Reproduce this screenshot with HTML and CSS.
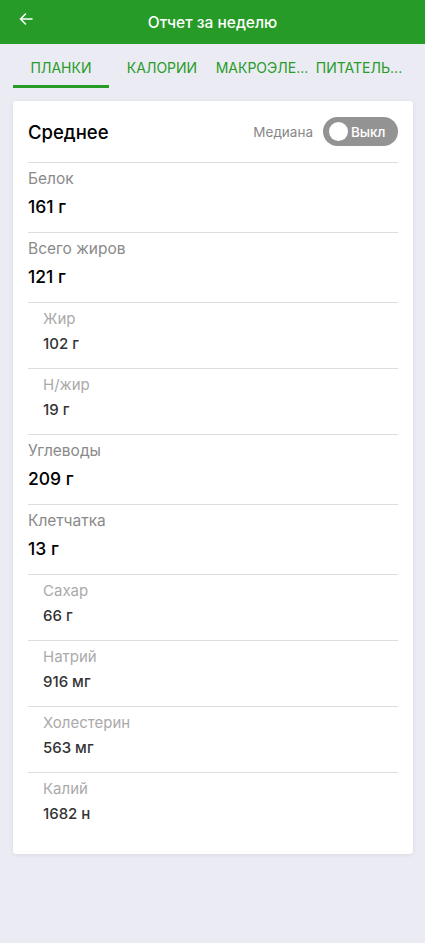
FILE: index.html
```html
<!DOCTYPE html>
<html lang="ru">
<head>
<meta charset="utf-8">
<link rel="stylesheet" href="styles.css">
</head>
<body>
<header class="topbar">
  <span class="back">
    <svg width="14" height="12" viewBox="0 0 14 12"><path d="M13 6H1.5M6.5 1L1.5 6l5 5" fill="none" stroke="#fff" stroke-width="1.6" stroke-linecap="round" stroke-linejoin="round"/></svg>
  </span>
  <h1 class="title">Отчет за неделю</h1>
</header>
<nav class="tabs">
  <div class="tab active">ПЛАНКИ</div>
  <div class="tab">КАЛОРИИ</div>
  <div class="tab">МАКРОЭЛЕ...</div>
  <div class="tab">ПИТАТЕЛЬ...</div>
</nav>
<main class="card">
  <div class="card-head">
    <div class="head-title">Среднее</div>
    <div class="median">
      <span class="median-label">Медиана</span>
      <span class="toggle"><span class="knob"></span><span class="toggle-text">Выкл</span></span>
    </div>
  </div>
  <div class="row main"><div class="label">Белок</div><div class="value">161 г</div></div>
  <div class="row main"><div class="label">Всего жиров</div><div class="value">121 г</div></div>
  <div class="row sub"><div class="label">Жир</div><div class="value">102 г</div></div>
  <div class="row sub"><div class="label">Н/жир</div><div class="value">19 г</div></div>
  <div class="row main"><div class="label">Углеводы</div><div class="value">209 г</div></div>
  <div class="row main"><div class="label">Клетчатка</div><div class="value">13 г</div></div>
  <div class="row sub"><div class="label">Сахар</div><div class="value">66 г</div></div>
  <div class="row sub"><div class="label">Натрий</div><div class="value">916 мг</div></div>
  <div class="row sub"><div class="label">Холестерин</div><div class="value">563 мг</div></div>
  <div class="row sub"><div class="label">Калий</div><div class="value">1682 н</div></div>
</main>
</body>
</html>
```
FILE: styles.css
```css
* { box-sizing: border-box; }
html, body { margin: 0; padding: 0; }
body {
  background: #ebebf3;
  font-family: Inter, Roboto, "Liberation Sans", sans-serif;
  min-height: 943px;
}
.topbar {
  height: 44px;
  background: #269b27;
  display: flex;
  align-items: center;
  justify-content: center;
  position: relative;
}
.back {
  position: absolute;
  left: 19px;
  top: 13px;
  display: flex;
}
.title {
  margin: 0;
  color: #fff;
  font-size: 15.5px;
  font-weight: 500;
}
.tabs {
  display: grid;
  grid-template-columns: 96px 106px 94px 100px;
  padding: 0 0 0 13px;
  height: 44px;
}
.tab {
  display: flex;
  align-items: center;
  justify-content: center;
  color: #269b27;
  font-size: 14px;
  white-space: nowrap;
  padding-top: 5px;
  border-bottom: 3px solid transparent;
}
.tab.active { border-bottom-color: #269b27; }
.card {
  margin: 13px 12px 0 13px;
  background: #fff;
  border-radius: 3px;
  box-shadow: 0 1px 4px rgba(0,0,0,0.08);
  padding: 0 15px 15px 15px;
}
.card-head {
  height: 62px;
  display: flex;
  align-items: center;
  justify-content: space-between;
  border-bottom: 1px solid #dedede;
}
.head-title {
  font-size: 18.5px;
  font-weight: 500;
  color: #000;
}
.median { display: flex; align-items: center; gap: 10px; }
.median-label { color: #888; font-size: 13.5px; }
.toggle {
  width: 75px;
  height: 29px;
  border-radius: 15px;
  background: #939393;
  display: flex;
  align-items: center;
  padding-left: 6px;
  gap: 3px;
}
.knob {
  width: 19px;
  height: 19px;
  border-radius: 50%;
  background: #fff;
}
.toggle-text {
  color: #fff;
  font-size: 13.5px;
  font-weight: 500;
}
.row {
  display: flex;
  flex-direction: column;
  border-bottom: 1px solid #dedede;
}
.row:last-child { border-bottom: none; }
.row.main { height: 70px; padding-top: 6px; }
.row.main .label { color: #8a8a8a; font-size: 15.5px; line-height: 20px; }
.row.main .value { color: #000; font-size: 17.5px; font-weight: 500; line-height: 22px; margin-top: 7px; }
.row.sub { height: 66px; padding: 6px 0 0 15px; }
.row.sub .label { color: #aaaaaa; font-size: 15px; line-height: 20px; }
.row.sub .value { color: #333; font-size: 15px; font-weight: 500; line-height: 20px; margin-top: 5px; }
```
